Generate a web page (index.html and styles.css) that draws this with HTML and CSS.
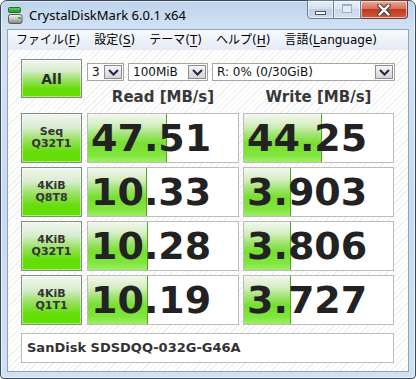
FILE: index.html
```html
<!DOCTYPE html>
<html lang="ja">
<head>
  <meta charset="UTF-8">
  <title>CrystalDiskMark 6.0.1 x64</title>
  <link rel="stylesheet" href="styles.css">
</head>
<body>

  <div class="window">
    <div class="titlebar">
      <svg class="app-icon" width="15" height="17" viewBox="0 0 15 17">
        <defs>
          <linearGradient id="gTop" x1="0" y1="0" x2="0" y2="1">
            <stop offset="0" stop-color="#5fd45f"/>
            <stop offset="1" stop-color="#1f8f2a"/>
          </linearGradient>
          <linearGradient id="gBody" x1="0" y1="0" x2="0" y2="1">
            <stop offset="0" stop-color="#f2f2f2"/>
            <stop offset="0.5" stop-color="#c4c4c4"/>
            <stop offset="1" stop-color="#7c7c7c"/>
          </linearGradient>
        </defs>
        <rect x="0.5" y="0.5" width="12" height="5" rx="1" fill="url(#gTop)" stroke="#2a6a2a"/>
        <rect x="0.5" y="7.5" width="13.5" height="9" rx="2" fill="url(#gBody)" stroke="#5a5a5a"/>
        <rect x="10" y="10" width="3" height="2" fill="#2fc42f"/>
      </svg>
      <span class="title">CrystalDiskMark 6.0.1 x64</span>
      <div class="caption">
        <span class="cap-btn min"><i></i></span>
        <span class="cap-btn max"><i></i></span>
        <span class="cap-btn close">
          <svg width="14" height="12" viewBox="0 0 14 12">
            <path d="M2.5 1.5 L11.5 10.5 M11.5 1.5 L2.5 10.5" stroke="#474747" stroke-width="4.6" stroke-linecap="round"/>
            <path d="M2.5 1.5 L11.5 10.5 M11.5 1.5 L2.5 10.5" stroke="#ffffff" stroke-width="2.4" stroke-linecap="round"/>
          </svg>
        </span>
      </div>
    </div>

    <div class="client">
      <div class="menubar">
        <span class="menu">ファイル(<u>F</u>)</span>
        <span class="menu">設定(<u>S</u>)</span>
        <span class="menu">テーマ(<u>T</u>)</span>
        <span class="menu">ヘルプ(<u>H</u>)</span>
        <span class="menu">言語(<u>L</u>anguage)</span>
      </div>

      <div class="content">
        <div class="top">
          <div class="test all">All</div>
          <div class="controls">
            <div class="selects">
              <div class="select s-count"><span>3</span><i class="arrow"><svg width="11" height="7" viewBox="0 0 11 7"><polyline points="1,1 5.5,5.5 10,1" fill="none" stroke="#1c2a48" stroke-width="2"/></svg></i></div>
              <div class="select s-size"><span>100MiB</span><i class="arrow"><svg width="11" height="7" viewBox="0 0 11 7"><polyline points="1,1 5.5,5.5 10,1" fill="none" stroke="#1c2a48" stroke-width="2"/></svg></i></div>
              <div class="select s-drive"><span>R: 0% (0/30GiB)</span><i class="arrow"><svg width="11" height="7" viewBox="0 0 11 7"><polyline points="1,1 5.5,5.5 10,1" fill="none" stroke="#1c2a48" stroke-width="2"/></svg></i></div>
            </div>
            <div class="heads">
              <div class="head">Read [MB/s]</div>
              <div class="head">Write [MB/s]</div>
            </div>
          </div>
        </div>

        <div class="rows">
          <div class="row">
            <div class="test">Seq<br>Q32T1</div>
            <div class="cell"><div class="bar" style="width:79px"></div><span class="value">47.51</span></div>
            <div class="cell"><div class="bar" style="width:78px"></div><span class="value">44.25</span></div>
          </div>
          <div class="row">
            <div class="test">4KiB<br>Q8T8</div>
            <div class="cell"><div class="bar" style="width:59px"></div><span class="value">10.33</span></div>
            <div class="cell"><div class="bar" style="width:47px"></div><span class="value">3.903</span></div>
          </div>
          <div class="row">
            <div class="test">4KiB<br>Q32T1</div>
            <div class="cell"><div class="bar" style="width:60px"></div><span class="value">10.28</span></div>
            <div class="cell"><div class="bar" style="width:47px"></div><span class="value">3.806</span></div>
          </div>
          <div class="row">
            <div class="test">4KiB<br>Q1T1</div>
            <div class="cell"><div class="bar" style="width:60px"></div><span class="value">10.19</span></div>
            <div class="cell"><div class="bar" style="width:47px"></div><span class="value">3.727</span></div>
          </div>
        </div>

        <div class="name">SanDisk SDSDQQ-032G-G46A</div>
      </div>
    </div>
  </div>

</body>
</html>
```

FILE: styles.css
```css
* {
  box-sizing: border-box;
}

body {
  margin: 0;
  width: 416px;
  height: 379px;
  overflow: hidden;
  background: #fff;
  font-family: "DejaVu Sans", sans-serif;
}

.window {
  height: 379px;
  border: 1px solid #3b4859;
  border-radius: 7px 7px 4px 4px;
  background: linear-gradient(#bdd3ec, #d3e3f4 30px, #c7dbf0 200px, #cfe1f4);
  box-shadow: inset 0 0 0 1px rgba(255, 255, 255, 0.55);
  padding: 0 6px 6px;
  display: flex;
  flex-direction: column;
}

/* title bar */
.titlebar {
  height: 28px;
  display: flex;
  align-items: flex-start;
}

.app-icon {
  margin: 6px 0 0 1px;
}

.title {
  font-family: "Noto Sans", sans-serif;
  font-size: 13px;
  line-height: 18px;
  color: #000;
  margin: 5px 0 0 6px;
}

.caption {
  margin: -1px 1px 0 auto;
  display: flex;
}

.cap-btn {
  height: 19px;
  display: flex;
  align-items: center;
  justify-content: center;
  border: 1px solid #6a7d96;
  box-shadow: inset 0 0 0 1px rgba(255, 255, 255, 0.6);
}

.min {
  width: 27px;
  border-radius: 0 0 0 4px;
  background: linear-gradient(#e6eef8, #d3e0f0 45%, #bccfe7 50%, #cbdcef);
  align-items: flex-end;
  padding-bottom: 3px;
}

.min i {
  width: 11px;
  height: 4px;
  background: #fff;
  border: 1px solid #4b5566;
}

.max {
  width: 27px;
  border-left: none;
  background: linear-gradient(#e9f0f8, #d9e4f1 45%, #c9d8ea 50%, #d3e0ef);
}

.max i {
  width: 10px;
  height: 9px;
  border: 1px solid #9fadc0;
  border-top-width: 2px;
  background: #e3ebf5;
  margin-top: -2px;
}

.close {
  width: 47px;
  border: 1px solid #6b3b33;
  border-left: none;
  border-radius: 0 0 4px 0;
  background: linear-gradient(#e8a999, #d57257 45%, #c0391d 50%, #d15a3a);
}

/* client area */
.client {
  flex: 1;
  border: 1px solid #8ea3bf;
  background: repeating-linear-gradient(135deg, #ffffff 0px, #ffffff 3px, #efefef 3px, #efefef 4px);
  display: flex;
  flex-direction: column;
}

.menubar {
  height: 20px;
  display: flex;
  padding-left: 1px;
  background: linear-gradient(#f7f9fc, #e4ebf5);
  font-family: "DejaVu Sans", "Noto Sans CJK JP", sans-serif;
  font-size: 12px;
  line-height: 20px;
  color: #000;
}

.menu {
  padding: 0 7px;
}

.menu u {
  text-decoration: underline;
  text-underline-offset: 2px;
}

.content {
  padding: 9px 0 0 13px;
}

.top {
  display: flex;
  height: 54px;
}

.test {
  width: 61px;
  flex: none;
  margin-right: 5px;
  border: 1px solid #7d907d;
  background: linear-gradient(#f2f6f0, #d9ecd0 28%, #96e05e 55%, #66dd0c 78%, #62e000);
  box-shadow: inset 0 0 0 1px rgba(255, 255, 255, 0.45);
  display: flex;
  flex-direction: column;
  align-items: center;
  justify-content: center;
  text-align: center;
  font-size: 11px;
  font-weight: bold;
  line-height: 12px;
  color: #333;
}

.all {
  height: 39px;
  font-size: 14px;
  color: #2a2a2a;
}

.controls {
  padding-top: 4px;
  width: 308px;
}

.selects {
  display: flex;
  gap: 4px;
}

.select {
  height: 18px;
  display: flex;
  align-items: center;
  border: 1px solid #a5a5a5;
  background: #fff;
  padding: 1px;
  font-size: 12px;
  color: #111;
}

.select span {
  flex: 1;
  padding-left: 3px;
  white-space: nowrap;
}

.s-count {
  width: 37px;
}

.s-size {
  width: 80px;
}

.s-drive {
  flex: 1;
}

.arrow {
  width: 18px;
  height: 14px;
  display: flex;
  align-items: center;
  justify-content: center;
  border: 1px solid #8c8c8c;
  background: linear-gradient(#f6f6f6, #e4e4e4 50%, #d4d4d4);
}

.heads {
  display: flex;
  height: 32px;
  line-height: 32px;
  font-size: 15px;
  font-weight: bold;
  color: #383838;
}

.head {
  width: 152px;
  text-align: center;
}

.head + .head {
  width: 151px;
  margin-left: 4px;
}

/* result rows */
.rows {
  display: flex;
  flex-direction: column;
  gap: 4px;
}

.row {
  display: flex;
  height: 50px;
}

.cell {
  position: relative;
  width: 152px;
  border: 1px solid #bcbcbc;
  background: #fff;
  overflow: hidden;
}

.cell + .cell {
  width: 151px;
  margin-left: 4px;
}

.bar {
  position: absolute;
  left: 0;
  top: 0;
  bottom: 0;
  border-right: 1px solid #4da81a;
  background: linear-gradient(#f4f7f1, #d2edbd 25%, #9be36a 45%, #79dd30 62%, #80e63c 85%, #9cee68);
}

.value {
  position: relative;
  display: block;
  padding-left: 3px;
  font-size: 38px;
  font-weight: bold;
  line-height: 48px;
  color: #222;
}

.name {
  width: 373px;
  height: 30px;
  margin-top: 8px;
  border: 1px solid #bcbcbc;
  background: #fff;
  padding-left: 5px;
  font-size: 13px;
  font-weight: bold;
  line-height: 28px;
  color: #333;
}
```
